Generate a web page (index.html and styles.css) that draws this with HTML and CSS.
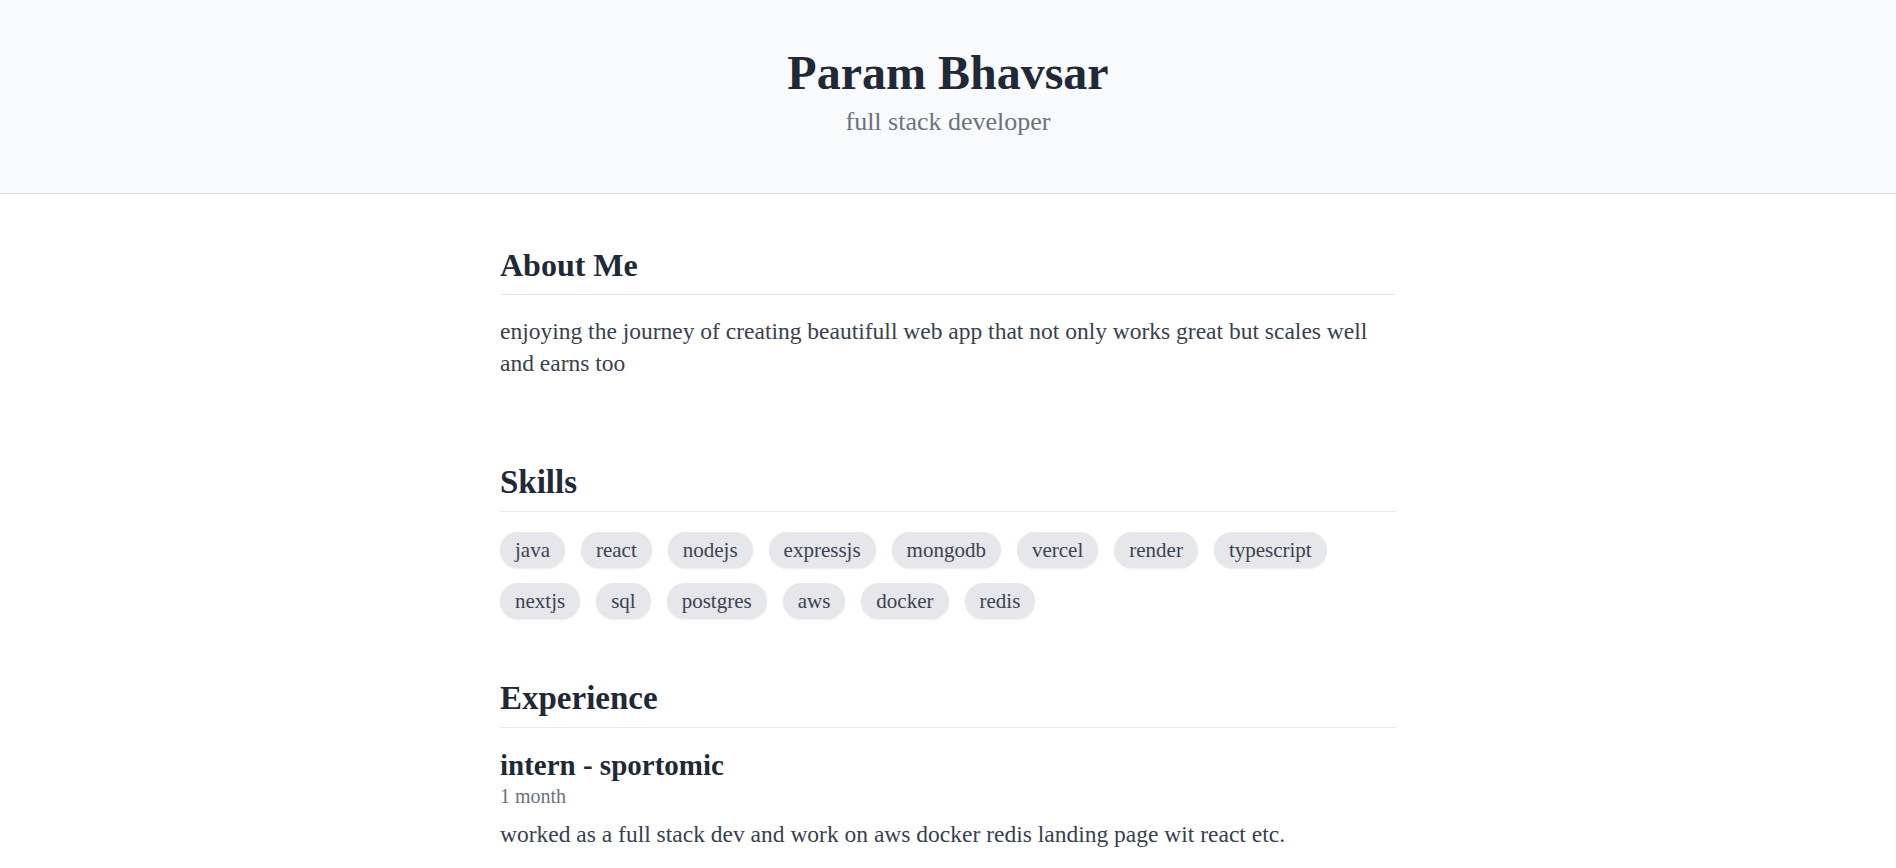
FILE: index.html
```html
<!DOCTYPE html>
<html lang="en">
<head>
<meta charset="utf-8">
<title>Param Bhavsar</title>
<link rel="stylesheet" href="styles.css">
</head>
<body>
<header class="hero">
  <h1 class="hero-name">Param Bhavsar</h1>
  <p class="hero-role">full stack developer</p>
</header>
<main class="content">
  <section class="section section-about">
    <h2 class="section-title">About Me</h2>
    <p class="about-text">enjoying the journey of creating beautifull web app that not only works great but scales well and earns too</p>
  </section>
  <section class="section section-skills">
    <h2 class="section-title">Skills</h2>
    <ul class="skills">
      <li class="skill">java</li>
      <li class="skill">react</li>
      <li class="skill">nodejs</li>
      <li class="skill">expressjs</li>
      <li class="skill">mongodb</li>
      <li class="skill">vercel</li>
      <li class="skill">render</li>
      <li class="skill">typescript</li>
      <li class="skill">nextjs</li>
      <li class="skill">sql</li>
      <li class="skill">postgres</li>
      <li class="skill">aws</li>
      <li class="skill">docker</li>
      <li class="skill">redis</li>
    </ul>
  </section>
  <section class="section section-experience">
    <h2 class="section-title">Experience</h2>
    <div class="job">
      <h3 class="job-title">intern - sportomic</h3>
      <p class="job-duration">1 month</p>
      <p class="job-desc">worked as a full stack dev and work on aws docker redis landing page wit react etc.</p>
    </div>
  </section>
</main>
</body>
</html>
```
FILE: styles.css
```css
* { box-sizing: border-box; }
html, body { margin: 0; padding: 0; background: #ffffff; }
body {
  font-family: "Liberation Serif", "Times New Roman", serif;
  color: #374151;
}
.hero {
  background: #f9fafb;
  border-bottom: 1px solid #d9dce1;
  padding: 45px 16px 55px;
  text-align: center;
}
.hero-name {
  margin: 0;
  font-size: 48px;
  line-height: 56px;
  font-weight: 700;
  color: #1f2937;
}
.hero-role {
  margin: 5px 0 0;
  font-size: 26px;
  line-height: 32px;
  color: #6b7280;
}
.content {
  width: 896px;
  margin: 0 auto;
  padding: 53px 0 40px;
}
.section-about { margin-bottom: 85px; }
.section-skills { margin-bottom: 61px; }
.section-title {
  margin: 0 0 20px;
  font-size: 33px;
  line-height: 36px;
  font-weight: 700;
  color: #1f2937;
  padding-bottom: 11px;
  border-bottom: 1px solid #e5e7eb;
}
.section-about .section-title { font-size: 32px; }
.about-text {
  margin: 0;
  font-size: 23.5px;
  line-height: 32px;
  color: #374151;
}
.skills {
  list-style: none;
  margin: 0;
  padding: 0;
  display: flex;
  flex-wrap: wrap;
  gap: 15px 16px;
}
.skill {
  background: #e5e7eb;
  color: #3b4352;
  border-radius: 999px;
  padding: 0 15px;
  height: 36px;
  line-height: 36px;
  font-size: 21px;
  box-shadow: 0 1px 2px rgba(0, 0, 0, 0.08);
}
.job-title {
  margin: 0;
  font-size: 29px;
  line-height: 34px;
  font-weight: 700;
  color: #1f2937;
}
.job-duration {
  margin: 2px 0 0;
  font-size: 20px;
  line-height: 24px;
  color: #6b7280;
}
.job-desc {
  margin: 10px 0 0;
  font-size: 23.5px;
  line-height: 32px;
  color: #374151;
}
```
